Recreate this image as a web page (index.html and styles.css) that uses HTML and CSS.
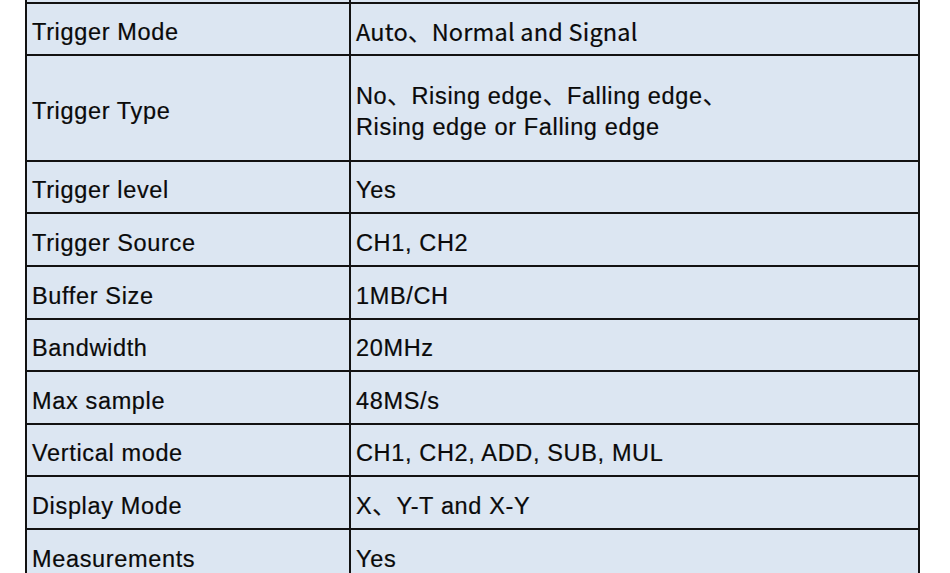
FILE: index.html
```html
<!DOCTYPE html>
<html lang="en">
<head>
<meta charset="utf-8">
<title>Specifications</title>
<link rel="stylesheet" href="styles.css">
</head>
<body>
<div class="spec">
  <div class="row r-top"><div class="cell key"></div><div class="cell val"></div></div>
  <div class="row r52"><div class="cell key"><span>Trigger Mode</span></div><div class="cell val cjk"><span>Auto、Normal and Signal</span></div></div>
  <div class="row r106"><div class="cell key"><span>Trigger Type</span></div><div class="cell val"><span>No、Rising edge、Falling edge、<br>Rising edge or Falling edge</span></div></div>
  <div class="row r52"><div class="cell key"><span>Trigger level</span></div><div class="cell val"><span>Yes</span></div></div>
  <div class="row r53"><div class="cell key"><span>Trigger Source</span></div><div class="cell val"><span>CH1, CH2</span></div></div>
  <div class="row r53"><div class="cell key"><span>Buffer Size</span></div><div class="cell val"><span>1MB/CH</span></div></div>
  <div class="row r52"><div class="cell key"><span>Bandwidth</span></div><div class="cell val"><span>20MHz</span></div></div>
  <div class="row r53"><div class="cell key"><span>Max sample</span></div><div class="cell val"><span>48MS/s</span></div></div>
  <div class="row r52"><div class="cell key"><span>Vertical mode</span></div><div class="cell val"><span>CH1, CH2, ADD, SUB, MUL</span></div></div>
  <div class="row r53"><div class="cell key"><span>Display Mode</span></div><div class="cell val"><span>X、Y-T and X-Y</span></div></div>
  <div class="row r53"><div class="cell key"><span>Measurements</span></div><div class="cell val"><span>Yes</span></div></div>
</div>
</body>
</html>
```

FILE: styles.css
```css
html, body {
  margin: 0;
  padding: 0;
  background: #ffffff;
  overflow: hidden;
}

.spec {
  margin-left: 25px;
  width: 893px;
  border-left: 2px solid #121212;
  display: flex;
  flex-direction: column;
  font-family: "Liberation Sans", Arial, "Noto Sans CJK JP", sans-serif;
  font-size: 23.5px;
  letter-spacing: 0.65px;
  color: #0a0a0a;
}

.row {
  display: grid;
  grid-template-columns: 324px 569px;
  box-sizing: border-box;
  border-bottom: 2px solid #121212;
  background: #dce6f2;
}

.r-top { height: 4px; }
.r52 { height: 52px; }
.r53 { height: 53px; }
.r106 { height: 106px; }

.cell {
  box-sizing: border-box;
  border-right: 2px solid #121212;
  display: flex;
  align-items: center;
  padding: 7px 4px 0 5px;
  line-height: 31px;
  white-space: nowrap;
  -webkit-text-stroke: 0.2px #0a0a0a;
}

.r-top .cell { padding: 0; }

.cjk {
  font-family: "Noto Sans CJK JP", "Noto Sans", sans-serif;
  letter-spacing: 0.2px;
  padding-top: 4px;
}
```
